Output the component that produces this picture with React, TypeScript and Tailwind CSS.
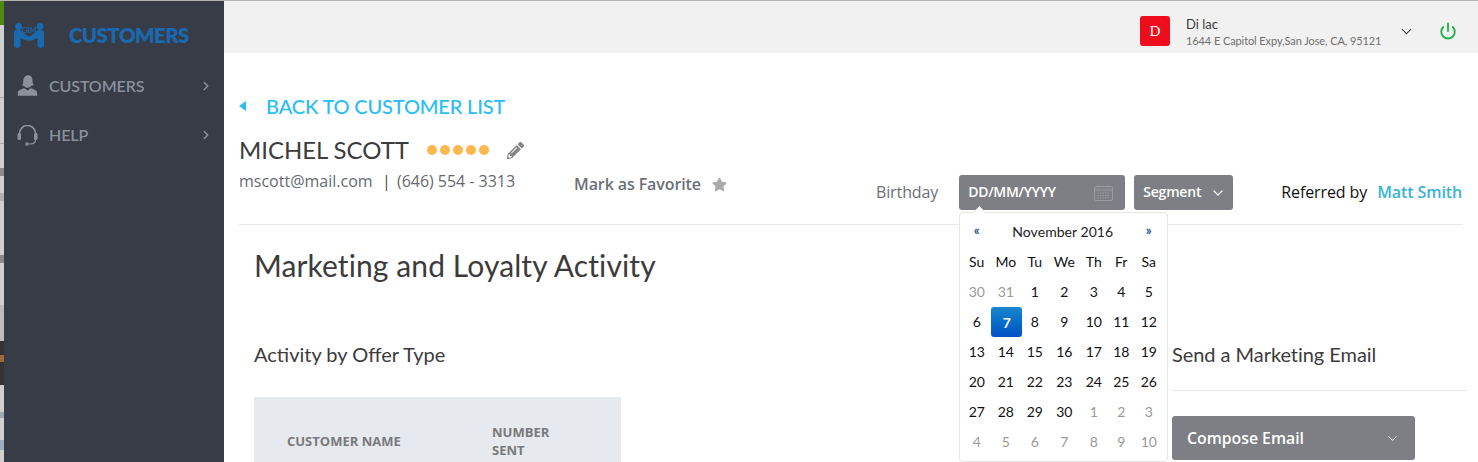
import React from "react";
import { ChevronDown, ChevronRight, Power } from "lucide-react";
import { FaPencilAlt, FaStar } from "react-icons/fa";

const weeks = [
  [["30", 1], ["31", 1], ["1"], ["2"], ["3"], ["4"], ["5"]],
  [["6"], ["7", 2], ["8"], ["9"], ["10"], ["11"], ["12"]],
  [["13"], ["14"], ["15"], ["16"], ["17"], ["18"], ["19"]],
  [["20"], ["21"], ["22"], ["23"], ["24"], ["25"], ["26"]],
  [["27"], ["28"], ["29"], ["30"], ["1", 1], ["2", 1], ["3", 1]],
  [["4", 1], ["5", 1], ["6", 1], ["7", 1], ["8", 1], ["9", 1], ["10", 1]],
] as [string, number?][][];

function CrmLogo() {
  return (
    <svg width="30" height="25" viewBox="0 0 30 25" fill="#1a68ad">
      <circle cx="4.500" cy="3.500" r="3.400" />
      <circle cx="26" cy="3.500" r="3.400" />
      <path d="M0 9.500C0 8 1 7 2.500 7H6l8 6.500h2L24 7h3.500C29 7 30 8 30 9.500V22c0 1.600-1 3-3 3s-3.500-1-3.500-3v-7L18 17.500h-6L6.500 15v7c0 2-1.500 3-3.500 3S0 23.600 0 22Z" />
      <text x="15" y="9.500" fontSize="6.500" fontFamily="Lato" fontWeight="700" textAnchor="middle">CRM</text>
    </svg>
  );
}

function AgentIcon() {
  return (
    <svg width="21" height="21" viewBox="0 0 21 21" fill="#8b919b">
      <path d="M11 0.300c2.800 0 4.400 2 4.400 4.800 0 1.800 0.500 3.900 1.400 5l-2.700 0.900c-0.800 1-2.200 1.800-3.600 1.800s-2.600-0.800-3.400-1.800l-2.100-0.600c1-1.100 1.300-2.900 1.300-4.500C6.300 2.800 8.200 0.300 11 0.300Z" />
      <path d="M7.500 13.200l3 2.300 3-2.300c3.600 0.800 6.700 2.200 6.700 4.800v2.800H0.800V18c0-2.600 3.100-4 6.700-4.800Z" />
    </svg>
  );
}

function HeadsetIcon() {
  return (
    <svg width="21" height="21" viewBox="0 0 21 21" fill="none" stroke="#8b919b">
      <path d="M2.500 11V8.500a8 8 0 0 1 16 0V11" strokeWidth="1.600" />
      <rect x="0.500" y="8" width="3.500" height="7" rx="1.500" fill="#8b919b" stroke="none" />
      <rect x="17" y="8" width="3.500" height="7" rx="1.500" fill="#8b919b" stroke="none" />
      <path d="M18.500 15c0 2.800-2.500 4-6 4" strokeWidth="1.300" />
      <circle cx="10" cy="19" r="1.800" fill="#8b919b" stroke="none" />
    </svg>
  );
}

function CalendarIcon() {
  return (
    <svg width="19" height="16" viewBox="0 0 19 16" fill="none" stroke="#999ca1">
      <rect x="0.500" y="1.500" width="18" height="14" rx="1.500" />
      <path d="M0.500 5h18" />
      <path d="M4.500 0.500v2M14.500 0.500v2" />
      <path d="M3.500 8h12M3.500 10.500h12M3.500 13h12" strokeDasharray="1.500 1" />
    </svg>
  );
}

function NavItem({ icon, label }: { icon: React.ReactNode; label: string }) {
  return (
    <div className="flex h-[49.500px] items-center pl-[13px] pr-[11px]">
      <div className="w-[32px] shrink-0">{icon}</div>
      <span className="flex-1 text-[16px] font-semibold tracking-[-0.1px] text-[#8b919b]">{label}</span>
      <ChevronRight size={14} strokeWidth={2.500} className="text-[#8b919b]" />
    </div>
  );
}

function Sidebar() {
  return (
    <aside className="flex w-[220px] shrink-0 flex-col bg-[#373c47]">
      <div className="flex h-[60px] items-center pl-[10px] pt-[9px]">
        <CrmLogo />
        <span className="ml-[25px] text-[20.500px] font-extrabold tracking-[-0.6px] text-[#1a68ad]">CUSTOMERS</span>
      </div>
      <NavItem icon={<AgentIcon />} label="CUSTOMERS" />
      <NavItem icon={<HeadsetIcon />} label="HELP" />
    </aside>
  );
}

function LeftEdge() {
  return (
    <div className="flex w-[4px] shrink-0 flex-col bg-[#cfcfcf]">
      <div className="h-[24px] shrink-0 bg-[#4f8a10]" />
      <div className="h-[72px] shrink-0" />
      <div className="h-[1px] shrink-0 bg-[#a8a8a8]" />
      <div className="h-[45px] shrink-0" />
      <div className="h-[1px] shrink-0 bg-[#a8a8a8]" />
      <div className="h-[24px] shrink-0" />
      <div className="h-[8px] shrink-0 bg-[#8a8a8a]" />
      <div className="h-[17px] shrink-0" />
      <div className="h-[8px] shrink-0 bg-[#b0b0b0]" />
      <div className="h-[54px] shrink-0" />
      <div className="h-[8px] shrink-0 bg-[#8a8a8a]" />
      <div className="h-[42px] shrink-0" />
      <div className="h-[36px] shrink-0 bg-[#bdbdbd]" />
      <div className="h-[14px] shrink-0 bg-[#333333]" />
      <div className="h-[7px] shrink-0 bg-[#9a6a3a]" />
      <div className="h-[23px] shrink-0 bg-[#333333]" />
      <div className="h-[27px] shrink-0" />
      <div className="h-[6px] shrink-0 bg-[#a0a8b2]" />
      <div className="h-[22px] shrink-0" />
      <div className="h-[10px] shrink-0 bg-[#a0abbd]" />
    </div>
  );
}

function Header() {
  return (
    <header className="flex h-[52px] shrink-0 items-center bg-[#f1f1f1] pl-[916px] pt-[8px]">
      <div className="flex h-[30px] w-[30px] items-center justify-center rounded-[3px] bg-[#ee0c1d] font-['Liberation_Serif',serif] text-[15px] text-white">D</div>
      <div className="ml-[16px] flex w-[213px] flex-col pt-[1px]">
        <span className="text-[13px] leading-[17px] text-[#3b3b3b]">Di lac</span>
        <span className="text-[11px] leading-[15px] tracking-[-0.09px] text-[#707070]">1644 E Capitol Expy,San Jose, CA, 95121</span>
      </div>
      <ChevronDown size={17} strokeWidth={1.600} className="ml-[-1px] text-[#444444]" />
      <Power size={18} strokeWidth={2.500} className="ml-[24px] text-[#22b14c]" />
    </header>
  );
}

const cell = "flex h-[30px] items-center justify-center";

function Calendar() {
  return (
    <div className="absolute left-[0px] top-[37px] w-[209px] rounded-[4px] border border-[#e6e6e6] bg-white pb-[5px] pl-[2px] pt-[3px] font-['Lato',sans-serif] text-[14px] font-normal text-[#111111]">
      <div className="absolute left-[15px] top-[-5px] h-[9px] w-[9px] rotate-45 border-l border-t border-[#e6e6e6] bg-white" />
      <div className="grid grid-cols-[29px_29px_29px_30px_29px_26px_29px]">
        <div className={`${cell} text-[13px] font-bold text-[#1a4f8a]`}>«</div>
        <div className={`${cell} col-span-5 text-[14px] tracking-[0.05px] text-[#222222]`}>November 2016</div>
        <div className={`${cell} text-[13px] font-bold text-[#1a4f8a]`}>»</div>
        {["Su", "Mo", "Tu", "We", "Th", "Fr", "Sa"].map((d) => (
          <div key={d} className={cell}>{d}</div>
        ))}
        {weeks.flat().map(([n, k], i) =>
          k === 2 ? (
            <div key={i} className={`${cell} -mb-px -mr-[2px] mt-[1px] rounded-[3px] bg-gradient-to-b from-[#1a86cc] to-[#0450c4] font-bold text-white`}>{n}</div>
          ) : (
            <div key={i} className={k === 1 ? `${cell} text-[#999999]` : cell}>{n}</div>
          ),
        )}
      </div>
    </div>
  );
}

function Main() {
  return (
    <main className="flex min-w-0 flex-1 flex-col">
      <Header />
      <div className="px-[15px]">
        <div className="mt-[42px] flex h-[22px] items-center text-[20px] font-medium text-[#29bdf2]">
          <svg width="7" height="10" viewBox="0 0 7 10" fill="#29bdf2"><path d="M7 0v10L0 5Z" /></svg>
          <span className="ml-[20px] tracking-[-0.15px]">BACK TO CUSTOMER LIST</span>
        </div>
        <div className="mt-[18px] flex h-[30px] items-center">
          <span className="text-[24px] tracking-[-0.05px] text-[#3d3b3b]">MICHEL SCOTT</span>
          <div className="ml-[18px] flex gap-[3px]">
            {[0, 1, 2, 3, 4].map((i) => (
              <div key={i} className="h-[10px] w-[10px] rounded-full bg-[#fdb84d]" />
            ))}
          </div>
          <FaPencilAlt size={17} className="ml-[18px] text-[#858585]" />
        </div>
        <div className="flex h-[60px] border-b border-[#e8e8e8]">
          <div className="mt-[5px] flex h-[22px] items-center font-['Open_Sans',sans-serif] text-[16px] text-[#666a70]">
            <span className="w-[134px]">mscott@mail.com</span>
            <span className="ml-[9px] w-[15px] text-[#4a4a50]">|</span>
            <span className="w-[119px] tracking-[-0.03px]">(646) 554 - 3313</span>
          </div>
          <div className="ml-[58px] mt-[8px] flex h-[22px] items-center font-['Open_Sans',sans-serif] text-[16px] font-semibold tracking-[-0.1px] text-[#6b7078]">
            <span>Mark as Favorite</span>
            <FaStar size={15} className="ml-[11px] text-[#aaaaaa]" />
          </div>
          <div className="ml-[149px] mt-[10px] flex h-[35px] items-center font-['Open_Sans',sans-serif] text-[16px]">
            <span className="mb-[2px] tracking-[-0.1px] text-[#6b7078]">Birthday</span>
            <div className="relative ml-[21px] flex h-[35px] w-[166px] items-center justify-between rounded-[3px] bg-[#7d7f84] pl-[9px] pr-[12px] text-[14px] font-semibold text-white">
              <span className="mb-[2px] tracking-[-0.3px]">DD/MM/YYYY</span>
              <CalendarIcon />
              <Calendar />
            </div>
            <div className="ml-[9px] flex h-[35px] w-[99px] items-center justify-between rounded-[3px] bg-[#7d7f84] pl-[9px] pr-[7px] text-[14px] font-semibold text-white">
              <span className="mb-[2px] tracking-[-0.2px]">Segment</span>
              <ChevronDown size={16} strokeWidth={1.800} />
            </div>
            <span className="mb-[2px] ml-[48px] tracking-[-0.1px] text-[#111111]">Referred by</span>
            <span className="mb-[2px] ml-[10px] font-semibold tracking-[-0.1px] text-[#3bb3d5]">Matt Smith</span>
          </div>
        </div>
        <div className="pl-[15px]">
          <h1 className="mt-[20px] text-[30px] leading-[40px] tracking-[0.1px] text-[#3d3b3b]">Marketing and Loyalty Activity</h1>
          <div className="mt-[54px] flex">
            <div className="w-[918px] shrink-0">
              <h2 className="text-[20px] leading-[30px] text-[#3d3b3b]">Activity by Offer Type</h2>
              <div className="mt-[28px] flex h-[80px] w-[367px] bg-[#e6e9ed] font-['Open_Sans',sans-serif] text-[13px] font-bold text-[#77797c]">
                <div className="ml-[33px] w-[205px] pt-[36px] leading-[16px]">CUSTOMER NAME</div>
                <div className="w-[70px] pt-[26px] leading-[18px]">NUMBER SENT</div>
              </div>
            </div>
            <div className="w-[295px] shrink-0">
              <h2 className="text-[20px] leading-[30px] tracking-[-0.05px] text-[#3d3b3b]">Send a Marketing Email</h2>
              <div className="mt-[21px] border-t border-[#e8e8e8]" />
              <div className="mt-[25px] flex h-[44px] w-[243px] items-center justify-between rounded-[3px] bg-[#7d7f84] px-[15px] pt-[1px] font-['Open_Sans',sans-serif] text-[15.800px] font-semibold text-white">
                <span>Compose Email</span>
                <ChevronDown size={15} strokeWidth={1.600} />
              </div>
            </div>
          </div>
        </div>
      </div>
    </main>
  );
}

export default function App() {
  return (
    <div className="flex h-[462px] w-[1478px] overflow-hidden border-t border-[#b4b4b4] bg-white font-['Lato',sans-serif]">
      <LeftEdge />
      <Sidebar />
      <Main />
    </div>
  );
}
